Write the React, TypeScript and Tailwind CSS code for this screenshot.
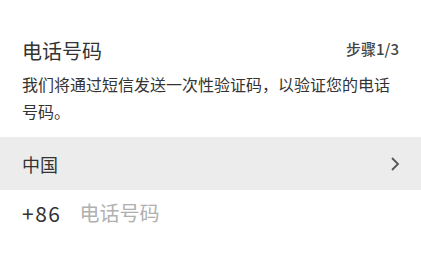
import React from "react";

export default function App() {
  return (
    <div
      className="w-[421px] h-[259px] bg-white overflow-hidden text-[#333333]"
      style={{ fontFamily: '"Noto Sans CJK SC", "Noto Sans", sans-serif' }}
    >
      <div className="px-[22px] pt-[37px]">
        <div className="flex items-start justify-between">
          <div className="text-[20px] leading-[28px] text-[#333333]">电话号码</div>
          <div className="mt-[2px] text-[15px] leading-[20px] font-medium text-[#444444]">步骤1/3</div>
        </div>
        <p className="mt-[6px] text-[16px] leading-[27px] text-[#333333]">
          我们将通过短信发送一次性验证码，以验证您的电话号码。
        </p>
      </div>
      <div className="mt-[12px] h-[53px] bg-[#ececec] flex items-center justify-between px-[22px]">
        <span className="text-[18px] leading-[24px] text-[#333333]">中国</span>
        <svg width="10" height="16" viewBox="0 0 10 16" className="mr-[-1px]">
          <path d="M2 2 L8 8 L2 14" fill="none" stroke="#555555" strokeWidth="1.8" />
        </svg>
      </div>
      <div className="h-[46px] flex items-center px-[22px]">
        <span className="text-[21px] leading-[28px] tracking-[1.5px] text-[#333333]">+86</span>
        <span className="ml-[18px] text-[20px] leading-[28px] text-[#b0b0b0]">电话号码</span>
      </div>
    </div>
  );
}
